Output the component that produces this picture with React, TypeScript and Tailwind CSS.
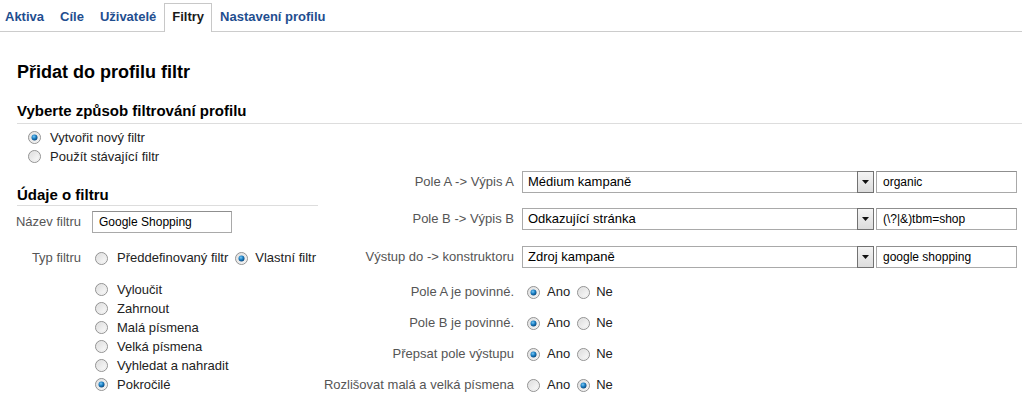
import React from 'react';

const tabs = ['Aktiva', 'Cíle', 'Uživatelé', 'Filtry', 'Nastavení profilu'];
const activeTab = 'Filtry';

const filterTypes = [
  { label: 'Vyloučit', checked: false },
  { label: 'Zahrnout', checked: false },
  { label: 'Malá písmena', checked: false },
  { label: 'Velká písmena', checked: false },
  { label: 'Vyhledat a nahradit', checked: false },
  { label: 'Pokročilé', checked: true },
];

const fieldRows = [
  { label: 'Pole A -> Výpis A', select: 'Médium kampaně', value: 'organic', mt: 'mt-0' },
  { label: 'Pole B -> Výpis B', select: 'Odkazující stránka', value: '(\\?|&)tbm=shop', mt: 'mt-[15px]' },
  { label: 'Výstup do -> konstruktoru', select: 'Zdroj kampaně', value: 'google shopping', mt: 'mt-[16px]' },
];

const yesNoRows = [
  { label: 'Pole A je povinné.', yes: true, mt: 'mt-[13px]' },
  { label: 'Pole B je povinné.', yes: true, mt: 'mt-[9px]' },
  { label: 'Přepsat pole výstupu', yes: true, mt: 'mt-[9px]' },
  { label: 'Rozlišovat malá a velká písmena', yes: false, mt: 'mt-[9px]' },
];

function RadioDefs() {
  return (
    <svg width="0" height="0" className="absolute">
      <defs>
        <linearGradient id="radio-face" x1="0" y1="0" x2="1" y2="1">
          <stop offset="0" stopColor="#d9d9d9" />
          <stop offset="1" stopColor="#ffffff" />
        </linearGradient>
        <radialGradient id="radio-dot" cx="0.4" cy="0.35" r="0.7">
          <stop offset="0" stopColor="#7cc8f4" />
          <stop offset="0.5" stopColor="#1a7fc4" />
          <stop offset="1" stopColor="#0a3f70" />
        </radialGradient>
      </defs>
    </svg>
  );
}

function Radio({ checked = false }: { checked?: boolean }) {
  return (
    <svg width="13" height="13" viewBox="0 0 13 13" className="shrink-0">
      <circle cx="6.5" cy="6.5" r="6" fill="url(#radio-face)" stroke="#929292" strokeWidth="1" />
      <circle cx="6.5" cy="6.5" r="4.6" fill="none" stroke="#e8e8e8" strokeWidth="0.8" />
      {checked ? <circle cx="6.5" cy="6.5" r="3" fill="url(#radio-dot)" /> : null}
    </svg>
  );
}

function FakeSelect({ text }: { text: string }) {
  return (
    <div className="ml-[8px] flex h-[22px] w-[352px] items-center border border-[#a9a9a9] bg-white">
      <span className="flex-1 truncate pl-[5px] text-[13px] text-black">{text}</span>
      <div className="-my-px -mr-px flex h-[22px] w-[17px] items-center justify-center border border-[#727272] bg-[linear-gradient(#f4f4f4,#dcdcdc)]">
        <svg width="7" height="4" viewBox="0 0 7 4">
          <path d="M0 0 H7 L3.5 4 Z" fill="#111" />
        </svg>
      </div>
    </div>
  );
}

export default function App() {
  return (
    <div className="min-h-[396px] bg-white font-['Liberation_Sans',Arial,sans-serif] text-[13px] text-[#222]">
      <RadioDefs />
      <nav className="flex h-[32px] items-end border-b border-[#cccccc]">
        <div className="-ml-[3px] flex items-end">
          {tabs.map((tab) => (
            <div
              key={tab}
              className={
                tab === activeTab
                  ? 'h-[29px] translate-y-[1px] border border-b-0 border-[#c8c8c8] bg-white px-[7px] pt-[5px] text-[13px] font-bold leading-4 text-[#1a1a1a]'
                  : 'h-[29px] translate-y-[1px] border border-b-0 border-transparent px-[7px] pt-[5px] text-[13px] font-bold leading-4 text-[#1f4e8f]'
              }
            >
              {tab}
            </div>
          ))}
        </div>
      </nav>

      <main className="pl-[17px]">
        <h1 className="mt-[29px] text-[18px] font-bold leading-[22px] text-black">Přidat do profilu filtr</h1>
        <h2 className="mt-[19px] border-b border-[#dddddd] pb-[3px] text-[15px] font-bold leading-[18px] text-black">
          Vyberte způsob filtrování profilu
        </h2>
        <div className="mt-[4px] pl-[11px]">
          <div className="flex h-[19px] items-center gap-[9px]">
            <Radio checked />
            <span>Vytvořit nový filtr</span>
          </div>
          <div className="flex h-[19px] items-center gap-[9px]">
            <Radio />
            <span>Použít stávající filtr</span>
          </div>
        </div>

        <div className="mt-[5px] flex">
          <section className="w-[301px] shrink-0">
            <h3 className="mt-[15px] border-b border-[#dddddd] pb-px text-[15px] font-bold leading-[18px] text-black">
              Údaje o filtru
            </h3>
            <div className="mt-[5px] flex h-[22px] items-center">
              <span className="flex w-[64px] shrink-0 justify-end whitespace-nowrap text-[#555]">Název filtru</span>
              <div className="ml-[11px] flex h-[22px] w-[140px] items-center border border-[#a9a9a9] border-t-[#8f8f8f] pl-[6px] text-[12px] text-black">
                Google Shopping
              </div>
            </div>
            <div className="mt-[14px] flex h-[22px] items-center">
              <span className="flex w-[64px] shrink-0 justify-end whitespace-nowrap text-[#555]">Typ filtru</span>
              <span className="ml-[14px]">
                <Radio />
              </span>
              <span className="ml-[9px] whitespace-nowrap">Předdefinovaný filtr</span>
              <span className="ml-[7px]">
                <Radio checked />
              </span>
              <span className="ml-[7px] whitespace-nowrap">Vlastní filtr</span>
            </div>
            <div className="mt-[11px] pl-[78px]">
              {filterTypes.map((item) => (
                <div key={item.label} className="flex h-[19px] items-center gap-[9px]">
                  <Radio checked={item.checked} />
                  <span>{item.label}</span>
                </div>
              ))}
            </div>
          </section>

          <section className="flex-1">
            {fieldRows.map((row) => (
              <div key={row.label} className={`flex h-[22px] items-center ${row.mt}`}>
                <span className="w-[196px] whitespace-nowrap text-right text-[#555]">{row.label}</span>
                <FakeSelect text={row.select} />
                <div className="ml-[2px] flex h-[22px] w-[141px] items-center border border-[#a9a9a9] border-t-[#8f8f8f] pl-[6px] text-[12px] text-black">
                  {row.value}
                </div>
              </div>
            ))}
            {yesNoRows.map((row) => (
              <div key={row.label} className={`flex h-[22px] items-center ${row.mt}`}>
                <span className="w-[196px] whitespace-nowrap text-right text-[#555]">{row.label}</span>
                <span className="ml-[13px]">
                  <Radio checked={row.yes} />
                </span>
                <span className="ml-[7px]">Ano</span>
                <span className="ml-[7px]">
                  <Radio checked={!row.yes} />
                </span>
                <span className="ml-[6px]">Ne</span>
              </div>
            ))}
          </section>
        </div>
      </main>
    </div>
  );
}
